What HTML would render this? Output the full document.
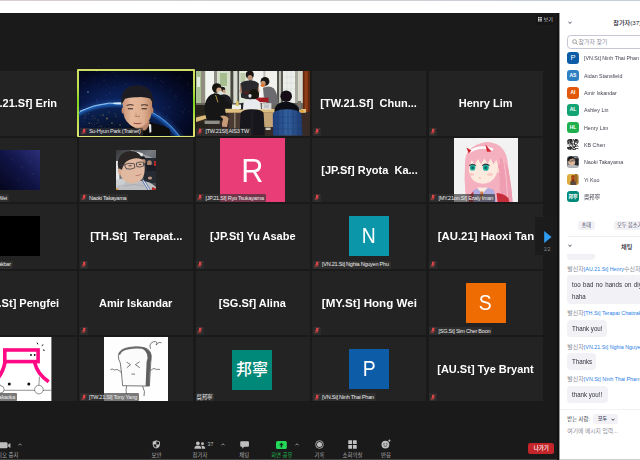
<!DOCTYPE html>
<html lang="ko"><head><meta charset="utf-8"><title>Zoom 회의</title>
<style>
html,body{margin:0;padding:0}
body{width:640px;height:460px;overflow:hidden;background:#1a1a1a;position:relative;font-family:"Liberation Sans","Noto Sans CJK KR",sans-serif}
.a{position:absolute}
.tile{position:absolute;width:114px;height:64.4px;background:#232323;overflow:hidden}
.tile>svg{position:absolute;display:block}
.nm,.nmr{position:absolute;left:6px;right:6px;top:0;height:64.4px;line-height:64.4px;text-align:center;color:#fff;font-weight:bold;font-size:11.3px;white-space:nowrap}
.nmr{left:auto;text-align:right}
.nm span,.nmr span{display:inline-block;transform:scaleX(.975);transform-origin:50% 50%}
.nmr span{transform-origin:100% 50%}
.lb,.lbr{position:absolute;left:.5px;bottom:0;height:8px;background:rgba(52,52,52,.66);color:#ececec;font-size:5.5px;letter-spacing:-.22px;line-height:8.6px;padding:0 2px 0 .5px;white-space:nowrap;display:flex;align-items:center;border-radius:1px}
.lb.mo{background:#2b2c2c;padding:0 0 0 .5px}.lb.mo .mic{margin-right:1.2px}
.lbr{left:auto;padding:0 2px}
.lb .mic{display:block;margin-right:2.3px;margin-left:.6px;flex:none;position:relative;top:-.4px}
.av{position:absolute;color:#fff;text-align:center}
.av span{display:inline-block;transform:scaleX(.9)}
.active{position:absolute;box-sizing:border-box;border-radius:1px;background:linear-gradient(180deg,#d3df6a 0%,#c2e04e 25%,#7fd61a 50%,#c6e055 80%,#e3e56f 100%)}
.panel{position:absolute;left:559px;top:0;width:81px;height:460px;background:#fff;overflow:hidden;color:#232333}
.pav{position:absolute;left:8.2px;width:11.6px;height:11.6px;border-radius:3px;color:#fff;font-weight:bold;text-align:center;line-height:11.6px;overflow:hidden}
.pav svg{display:block}
.pn{position:absolute;left:24.6px;height:11.6px;line-height:12.4px;font-size:6.2px;color:#43434f;white-space:nowrap;transform:scaleX(.86);transform-origin:0 50%}
.btn{position:absolute;background:#f1f1f6;border-radius:2.5px;color:#454556;font-size:5.2px;text-align:center;white-space:nowrap}
.snd{position:absolute;left:8.3px;font-size:6px;line-height:7px;color:#8a8a95;white-space:nowrap}
.snd b{font-weight:normal;color:#2a80e6;font-size:5.35px}
.bub{position:absolute;left:8px;background:#f1f1f6;border-radius:4px;font-size:7px;color:#30303c;white-space:nowrap}
.bub span{position:absolute;left:4.8px;transform:scaleX(.88);transform-origin:0 50%}
.tl{position:absolute;top:450.6px;font-size:5.4px;line-height:8px;color:#aaaaaa;text-align:center;width:40px;white-space:nowrap}
.ti{position:absolute}
</style></head><body>
<div class="a" style="left:0;top:0;width:640px;height:12.6px;background:#fff"></div>
<div class="tile" style="left:-37.5px;top:71.4px"><div class="nmr" style="right:19.5px"><span>.21.Sf] Erin</span></div></div>
<div class="active" style="left:77.2px;top:69.2px;width:117.8px;height:67.8px"></div>
<div class="tile" style="left:79px;top:71.4px;"><svg style="left:0;top:0" width="114" height="64.4" viewBox="0 0 114 64.4">
<defs>
<radialGradient id="spbg" cx="38%" cy="62%" r="75%"><stop offset="0" stop-color="#0f2d6e"/><stop offset=".4" stop-color="#0a1d52"/><stop offset=".75" stop-color="#050c2b"/><stop offset="1" stop-color="#020514"/></radialGradient>
<radialGradient id="earth" cx="36.4" cy="111.7" r="79.5" gradientUnits="userSpaceOnUse"><stop offset="0" stop-color="#04091c"/><stop offset=".7" stop-color="#06112c"/><stop offset=".94" stop-color="#0b2152"/><stop offset=".988" stop-color="#1f5fb8"/><stop offset="1" stop-color="#7cc4ff"/></radialGradient>
<radialGradient id="glow" cx="36.4" cy="111.7" r="85" gradientUnits="userSpaceOnUse"><stop offset=".9" stop-color="#3f9cff" stop-opacity=".4"/><stop offset="1" stop-color="#1c56c0" stop-opacity="0"/></radialGradient>
<filter id="b1" x="-20%" y="-20%" width="140%" height="140%"><feGaussianBlur stdDeviation=".7"/></filter>
<filter id="b2" x="-20%" y="-20%" width="140%" height="140%"><feGaussianBlur stdDeviation="1.2"/></filter>
<linearGradient id="skin" x1="0" x2="1" y1="0" y2="0"><stop offset="0" stop-color="#cc9679"/><stop offset=".3" stop-color="#e6b89b"/><stop offset=".7" stop-color="#dfae90"/><stop offset="1" stop-color="#bd8768"/></linearGradient>
</defs>
<rect width="114" height="64.4" fill="url(#spbg)"/>
<g fill="#7fa4e8" opacity=".7"><circle cx="27.1" cy="24.5" r="0.18"/><circle cx="68.8" cy="28.2" r="0.13"/><circle cx="1.5" cy="37.7" r="0.16"/><circle cx="26.7" cy="44.8" r="0.20"/><circle cx="95.4" cy="21.4" r="0.22"/><circle cx="17.2" cy="28.6" r="0.26"/><circle cx="59.6" cy="33.4" r="0.23"/><circle cx="7.3" cy="34.1" r="0.21"/><circle cx="34.3" cy="1.4" r="0.26"/><circle cx="53.9" cy="32.3" r="0.26"/><circle cx="81.4" cy="41.4" r="0.18"/><circle cx="91.3" cy="20.0" r="0.27"/><circle cx="100.2" cy="4.4" r="0.14"/><circle cx="24.7" cy="43.4" r="0.19"/><circle cx="71.4" cy="13.5" r="0.20"/><circle cx="44.0" cy="15.8" r="0.21"/><circle cx="66.6" cy="40.7" r="0.23"/><circle cx="105.9" cy="38.5" r="0.28"/><circle cx="76.5" cy="7.3" r="0.26"/><circle cx="110.0" cy="40.7" r="0.21"/><circle cx="81.4" cy="9.5" r="0.25"/><circle cx="65.4" cy="12.8" r="0.13"/><circle cx="97.3" cy="44.5" r="0.13"/><circle cx="91.3" cy="18.5" r="0.14"/><circle cx="33.5" cy="34.6" r="0.26"/><circle cx="5.0" cy="27.7" r="0.13"/><circle cx="81.9" cy="14.9" r="0.26"/><circle cx="111.8" cy="22.7" r="0.28"/><circle cx="35.3" cy="3.5" r="0.22"/><circle cx="3.6" cy="8.9" r="0.19"/><circle cx="69.6" cy="7.0" r="0.13"/><circle cx="98.9" cy="14.1" r="0.27"/><circle cx="102.2" cy="17.0" r="0.19"/><circle cx="59.3" cy="29.0" r="0.22"/><circle cx="63.8" cy="27.9" r="0.27"/><circle cx="57.8" cy="19.4" r="0.24"/><circle cx="27.1" cy="13.5" r="0.28"/><circle cx="59.4" cy="24.7" r="0.12"/><circle cx="47.3" cy="26.1" r="0.12"/><circle cx="70.2" cy="28.4" r="0.13"/><circle cx="71.5" cy="21.0" r="0.23"/><circle cx="40.2" cy="31.8" r="0.24"/><circle cx="2.5" cy="2.7" r="0.23"/><circle cx="109.8" cy="11.3" r="0.19"/><circle cx="67.6" cy="14.4" r="0.18"/><circle cx="35.6" cy="16.6" r="0.22"/><circle cx="34.2" cy="17.0" r="0.24"/><circle cx="3.1" cy="25.6" r="0.24"/><circle cx="35.3" cy="10.0" r="0.25"/><circle cx="27.2" cy="8.4" r="0.19"/><circle cx="79.6" cy="4.6" r="0.17"/><circle cx="38.0" cy="37.5" r="0.19"/><circle cx="97.5" cy="7.6" r="0.17"/><circle cx="74.1" cy="39.8" r="0.19"/><circle cx="25.7" cy="5.4" r="0.20"/><circle cx="21.8" cy="36.3" r="0.25"/><circle cx="20.9" cy="12.5" r="0.25"/><circle cx="73.2" cy="36.3" r="0.18"/><circle cx="14.8" cy="13.1" r="0.25"/><circle cx="30.9" cy="15.6" r="0.19"/><circle cx="47.9" cy="18.4" r="0.27"/><circle cx="17.8" cy="0.2" r="0.27"/><circle cx="100.3" cy="44.4" r="0.19"/><circle cx="108.3" cy="41.7" r="0.16"/><circle cx="85.0" cy="37.7" r="0.23"/><circle cx="59.2" cy="13.0" r="0.17"/><circle cx="25.9" cy="3.1" r="0.21"/><circle cx="32.7" cy="36.5" r="0.13"/><circle cx="103.0" cy="31.2" r="0.27"/><circle cx="102.2" cy="40.5" r="0.21"/></g><g fill="#9fc4ff"><circle cx="9" cy="21" r=".7" opacity=".8"/><circle cx="25" cy="9" r=".3"/><circle cx="31" cy="22" r=".35"/><circle cx="47" cy="13" r=".3"/><circle cx="18" cy="30" r=".3"/><circle cx="84" cy="11" r=".3"/><circle cx="97" cy="25" r=".35"/><circle cx="76" cy="7" r=".25"/><circle cx="104" cy="41" r=".3"/><circle cx="90" cy="36" r=".3"/><circle cx="38" cy="5" r=".25"/><circle cx="15" cy="7" r=".25"/><circle cx="67" cy="16" r=".25"/><circle cx="109" cy="14" r=".25"/><circle cx="54" cy="6" r=".2"/><circle cx="100" cy="6" r=".25"/><circle cx="5" cy="12" r=".25"/><circle cx="88" cy="45" r=".25"/></g>
<circle cx="36.4" cy="111.7" r="85" fill="url(#glow)"/>
<circle cx="36.4" cy="111.7" r="79.5" fill="url(#earth)"/>
<path d="M1 40.2 A79.5 79.5 0 0 1 60 35.8" fill="none" stroke="#a9dcff" stroke-width=".9" filter="url(#b1)" opacity=".9"/>
<ellipse cx="41" cy="32.4" rx="7" ry="1.1" fill="#dff3ff" filter="url(#b1)" opacity=".85"/>
<g fill="#c9a56a" opacity=".7"><circle cx="2.6" cy="56.9" r="0.23"/><circle cx="14.6" cy="55.3" r="0.30"/><circle cx="19.4" cy="60.8" r="0.32"/><circle cx="16.3" cy="47.0" r="0.37"/><circle cx="22.0" cy="57.6" r="0.27"/><circle cx="10.3" cy="52.7" r="0.36"/><circle cx="9.2" cy="57.8" r="0.38"/><circle cx="35.9" cy="58.5" r="0.20"/><circle cx="28.4" cy="59.3" r="0.21"/><circle cx="13.4" cy="47.4" r="0.31"/><circle cx="19.8" cy="51.5" r="0.36"/><circle cx="2.1" cy="43.1" r="0.23"/><circle cx="7.2" cy="43.4" r="0.39"/><circle cx="37.9" cy="43.7" r="0.30"/><circle cx="15.3" cy="48.3" r="0.27"/><circle cx="29.2" cy="53.7" r="0.27"/><circle cx="10.0" cy="48.6" r="0.22"/><circle cx="25.3" cy="56.3" r="0.28"/><circle cx="5.4" cy="45.6" r="0.27"/><circle cx="27.4" cy="57.7" r="0.28"/><circle cx="35.6" cy="54.5" r="0.29"/><circle cx="17.6" cy="51.9" r="0.34"/><circle cx="19.7" cy="55.9" r="0.29"/><circle cx="12.3" cy="52.7" r="0.34"/><circle cx="5.0" cy="50.5" r="0.29"/><circle cx="38.9" cy="60.7" r="0.27"/><circle cx="39.7" cy="57.8" r="0.25"/><circle cx="21.5" cy="44.5" r="0.36"/><circle cx="29.8" cy="59.7" r="0.36"/><circle cx="30.0" cy="56.7" r="0.31"/><circle cx="6.3" cy="53.8" r="0.20"/><circle cx="8.0" cy="57.5" r="0.21"/><circle cx="5.9" cy="44.0" r="0.38"/><circle cx="9.5" cy="42.5" r="0.37"/><circle cx="7.1" cy="58.9" r="0.33"/><circle cx="37.1" cy="61.0" r="0.32"/><circle cx="35.5" cy="42.7" r="0.35"/><circle cx="23.5" cy="56.3" r="0.22"/><circle cx="33.5" cy="60.7" r="0.21"/><circle cx="15.6" cy="53.3" r="0.37"/></g><g fill="#d9b26a" filter="url(#b1)" opacity=".55"><circle cx="24" cy="44" r=".7"/><circle cx="28" cy="47.5" r=".9"/><circle cx="19" cy="49" r=".6"/><circle cx="33" cy="52" r=".8"/><circle cx="14" cy="45" r=".5"/><circle cx="37" cy="45" r=".6"/><circle cx="10" cy="52" r=".6"/><circle cx="41" cy="54" r=".7"/><circle cx="22" cy="55" r=".6"/><circle cx="30" cy="41" r=".5"/><circle cx="6" cy="47" r=".5"/></g>
<g filter="url(#b1)">
<path d="M50 56 L48 64.4 H92 L90.4 58 Q85 54.6 76 52.6 L68 50 Z" fill="#0b0b0d"/>
<path d="M69.6 52.8 L72.2 53.6 L72.4 61 L70.6 62 Z" fill="#ececec"/>
<path d="M50 52 Q57 60 66 59.4 Q70.6 56 70.6 50 L52 46 Z" fill="#b98567"/>
<path d="M44 31 Q43 44 47.4 50 Q52.6 56.6 58.5 56.8 Q64.6 56.6 69.6 50 Q74 44 73 30 Q67 21 58.4 21 Q49 21 44 31 Z" fill="url(#skin)"/>
<ellipse cx="43.8" cy="39.6" rx="1.2" ry="3" fill="#c28e72"/><ellipse cx="73.2" cy="39.6" rx="1.2" ry="3" fill="#b78265"/>
<path d="M42.6 35.6 Q40.6 21 49.6 16 Q58 12.6 67 16 Q75.6 21 74.2 35.6 Q73.6 31 71.4 27.6 Q65 25.6 58.4 26.2 Q51 25.8 45.6 27.8 Q43.6 31 42.6 35.6 Z" fill="#1d1d21"/>
<path d="M47.6 34.4 Q51 33 54.6 34.2 M62 34.2 Q65.6 33 69 34.4" stroke="#3a2a24" stroke-width="1" fill="none"/>
<path d="M48.8 37.8 H54 M62.6 37.8 H67.8" stroke="#2a1d1a" stroke-width="1"/>
<path d="M55.8 45 Q58.4 46.4 61 45" stroke="#a06a55" stroke-width=".8" fill="none"/>
<path d="M54.4 52 Q58.4 53.2 62.4 52" stroke="#a4524c" stroke-width="1.1" fill="none"/><path d="M56.6 42 Q58 44 57 45.4" stroke="#b98567" stroke-width=".6" fill="none"/>
</g>
</svg>
<div class="lb"><svg class="mic" viewBox="0.4 0.4 6.4 7.4" width="6" height="7"><rect x="2.6" y="0.8" width="2" height="4" rx="1" fill="#e8474a"/><path d="M2 3.8 Q2 5.8 3.6 5.8 Q5.2 5.8 5.2 3.8 M3.6 5.8 V7" stroke="#e8474a" stroke-width=".6" fill="none"/><path d="M0.9 7 L6.3 1" stroke="#e8474a" stroke-width=".7" /></svg><span>Su-Hyun Park (Trainer)</span></div></div>
<div class="tile" style="left:195.5px;top:71.4px;"><svg style="left:0;top:0" width="114" height="64.4" viewBox="0 0 114 64.4">
<defs>
<filter id="rb" x="-10%" y="-10%" width="120%" height="120%"><feGaussianBlur stdDeviation=".5"/></filter>
<linearGradient id="win" x1="0" x2="0" y1="0" y2="1"><stop offset="0" stop-color="#edf1ea"/><stop offset=".5" stop-color="#dde3d6"/><stop offset="1" stop-color="#c9c7b9"/></linearGradient>
<linearGradient id="jk" x1="0" x2="1" y1="0" y2="0"><stop offset="0" stop-color="#1f3f7c"/><stop offset=".5" stop-color="#34619f"/><stop offset="1" stop-color="#1d3b73"/></linearGradient>
</defs>
<rect width="114" height="64.4" fill="url(#win)"/>
<g filter="url(#rb)">
<rect x="0" y="0" width="5" height="32" fill="#a9c094"/>
<rect x="1" y="6" width="3" height="10" fill="#e4ecdf"/>
<rect x="5" y="0" width="4.4" height="36" fill="#918d80"/>
<rect x="9.4" y="0" width="8.6" height="32" fill="#f2f4ef"/>
<rect x="18" y="0" width="3.2" height="36" fill="#8e8e86"/>
<rect x="21.2" y="0" width="13.2" height="32" fill="#d5dfc9"/>
<rect x="24" y="2" width="7" height="13" fill="#a6bd8e"/>
<rect x="22" y="15" width="6" height="9" fill="#eef2ea"/>
<rect x="34.4" y="0" width="3.2" height="38" fill="#46463f"/>
<rect x="37.6" y="0" width="3.8" height="34" fill="#d6dacf"/>
<rect x="41.4" y="0" width="2" height="38" fill="#4f4f48"/>
<rect x="43.4" y="0" width="9.6" height="32" fill="#e2ead9"/>
<rect x="44.4" y="2" width="5" height="9" fill="#bccaaa"/>
<rect x="53" y="0" width="3.6" height="36" fill="#6a6a62"/>
<rect x="56.6" y="0" width="10.8" height="32" fill="#f3f4f1"/>
<rect x="67.4" y="0" width="2.2" height="32" fill="#bdbdb6"/>
<rect x="69.6" y="0" width="11.4" height="32" fill="#f1f2ee"/>
<rect x="81" y="0" width="2.4" height="36" fill="#56564f"/>
<rect x="83.4" y="0" width="1.4" height="34" fill="#cfcfc8"/>
<rect x="84.8" y="0" width="2.2" height="36" fill="#5c5c55"/>
<rect x="87" y="0" width="12" height="32" fill="#eceeea"/>
<path d="M87 6 H99 M87 12 H99 M87 18 H99 M91 0 V30 M95 0 V30" stroke="#d3d5d0" stroke-width=".5"/>
<rect x="99" y="0" width="3" height="36" fill="#a9a89e"/>
<rect x="102" y="0" width="5" height="36" fill="#d6d6cd"/>
<rect x="106.8" y="0" width="7.2" height="64.4" fill="#5e2610"/>
<rect x="108.4" y="0" width="3.4" height="46" fill="#8d3c16"/>
<!-- lower background -->
<rect x="0" y="32" width="107" height="10" fill="#6a665b"/>
<rect x="0" y="41" width="114" height="24" fill="#372b25"/>
<rect x="0" y="34" width="9" height="10" fill="#26231f"/>
<rect x="67" y="42" width="12" height="14" fill="#c4a374"/>
<rect x="33" y="42" width="12" height="16" fill="#4a3b31"/>
<rect x="38" y="42" width="1.6" height="16" fill="#8a7a68"/>
<!-- tables -->
<path d="M23 38 H110 V41.8 H23 Z" fill="#dfbf80"/>
<path d="M0 46.6 L13.6 43 V46.4 L0 51 Z" fill="#dcbc7a"/>
<rect x="0" y="51" width="13" height="13.4" fill="#26221f"/>
<!-- back person 2 -->
<circle cx="26.6" cy="18.4" r="2.6" fill="#1c1a18"/>
<ellipse cx="28" cy="20.4" rx="1.6" ry="1.8" fill="#c79f84"/>
<path d="M24 24 Q30 21.6 34 26 L36.6 33 L35 36.6 H24 Z" fill="#1e1e22"/>
<!-- left seated person -->
<circle cx="20.8" cy="17" r="4.8" fill="#16130f"/>
<ellipse cx="23" cy="19.4" rx="2.7" ry="3" fill="#d2aa8c"/>
<ellipse cx="24.4" cy="21.6" rx="2.2" ry="1.9" fill="#d4e2db"/>
<path d="M9 33 Q11 24.4 18 22.6 Q26 22.6 29 28.4 L36 35 L35.4 37.6 L29 37.4 L29.6 42 L31 49 L11.6 50 Q7.6 42 9 33 Z" fill="#131315"/>
<path d="M19.6 24 L22 31.4" stroke="#c9a64a" stroke-width=".9"/>
<path d="M24 45 Q30 43.4 32.6 47.6 L31 56 L25.4 55.4 L27 48 Z" fill="#c79a78"/>
<rect x="8.6" y="49.6" width="15" height="3.4" fill="#8f8d88"/>
<rect x="12" y="53" width="14" height="11.4" fill="#2d2823"/>
<!-- standing center -->
<circle cx="53.8" cy="3.8" r="4" fill="#1a1613"/>
<ellipse cx="54" cy="6.6" rx="2.5" ry="2.7" fill="#b98e73"/>
<path d="M44.4 12.4 Q48 9.4 54 9.6 Q60 9.4 62.8 12.4 L62.8 27.6 Q54 30 45 26.6 Z" fill="#2a2a2f"/>
<path d="M45 13 L43.4 21 L46 22.4 Z M62.4 13 L63.6 21 L61.4 22.4 Z" fill="#b98e73"/>
<rect x="48" y="20" width="11.6" height="3.4" fill="#4a2420"/>
<!-- standing right w/ orange mask -->
<circle cx="69" cy="10.4" r="4.4" fill="#1b1714"/>
<ellipse cx="67.2" cy="12.4" rx="2.4" ry="2.7" fill="#c49673"/>
<ellipse cx="66.8" cy="14.2" rx="2.2" ry="1.7" fill="#dd7530"/>
<path d="M67 17 Q73 13.6 78 17.4 Q82 23 82.4 33.8 L71 35 L68 25 Z" fill="#6c6c70"/>
<!-- red laptop -->
<rect x="60.2" y="26.6" width="12.4" height="4.6" fill="#a01c24"/>
<!-- seated center white shirt -->
<circle cx="58" cy="23.2" r="5" fill="#15120f"/>
<ellipse cx="54" cy="24.8" rx="1.6" ry="1.9" fill="#dfe3e6"/>
<path d="M47.4 31.4 Q50 27.8 57 28.2 Q62.6 28.2 64.4 32 L65 38.4 H46.6 Z" fill="#e9eaee"/>
<path d="M43.4 33 L47.4 31.4 L47 38.4 L43.8 38.4 Z" fill="#23232a"/>
<!-- things on table -->
<rect x="66" y="32.2" width="9.4" height="6.4" fill="#dcdcd9"/>
<rect x="68" y="33.4" width="5" height="3.6" fill="#bfc3c6"/>
<rect x="101.6" y="30" width="3.6" height="9" fill="#77756c"/>
<rect x="104.6" y="39" width="3" height="2.4" fill="#e0a832"/>
<rect x="36" y="33.6" width="9" height="4.4" fill="#efefe8"/>
<rect x="40" y="30" width="2.6" height="5" fill="#d8c46a"/>
<!-- right seated black -->
<circle cx="90.2" cy="25.2" r="5.8" fill="#131112"/>
<path d="M78.6 38 Q80 32 88 30.8 Q98 30.4 102.6 36.4 L103.6 42.6 H78.4 Z" fill="#0f0f12"/>
<!-- center chair w/ dark jacket -->
<path d="M44.6 42 Q46.6 38.2 55.6 38.2 Q66 38.2 67.6 42 L68.8 64.4 H43.6 Z" fill="#14141a"/>
<path d="M56 39 V64" stroke="#2a2a31" stroke-width=".8"/>
<!-- blue jacket chair -->
<path d="M76.8 43 Q78 38.6 90 38.2 Q103.6 38.2 105.4 43 L106.4 64.4 H77 Z" fill="url(#jk)"/>
<path d="M82 40 V64 M87 39 V64 M92 39 V64 M97 39 V64 M102 40 V64" stroke="#183463" stroke-width=".7" opacity=".7"/>
<path d="M77 46 H106 M77 52 H106 M77 58 H106" stroke="#1b3a70" stroke-width=".5" opacity=".6"/>
<rect x="69.6" y="56.6" width="5" height="2.4" fill="#cfcac0"/>
</g>
</svg>
<div class="lb"><svg class="mic" viewBox="0.4 0.4 6.4 7.4" width="6" height="7"><rect x="2.6" y="0.8" width="2" height="4" rx="1" fill="#e8474a"/><path d="M2 3.8 Q2 5.8 3.6 5.8 Q5.2 5.8 5.2 3.8 M3.6 5.8 V7" stroke="#e8474a" stroke-width=".6" fill="none"/><path d="M0.9 7 L6.3 1" stroke="#e8474a" stroke-width=".7" /></svg><span>[TW.21Sf] AIS3 TW</span></div></div>
<div class="tile" style="left:312px;top:71.4px;"><div class="nm"><span>[TW.21.Sf]&nbsp; Chun...</span></div><div class="lb mo"><svg class="mic" viewBox="0.4 0.4 6.4 7.4" width="6" height="7"><rect x="2.6" y="0.8" width="2" height="4" rx="1" fill="#e8474a"/><path d="M2 3.8 Q2 5.8 3.6 5.8 Q5.2 5.8 5.2 3.8 M3.6 5.8 V7" stroke="#e8474a" stroke-width=".6" fill="none"/><path d="M0.9 7 L6.3 1" stroke="#e8474a" stroke-width=".7" /></svg></div></div>
<div class="tile" style="left:428.5px;top:71.4px;"><div class="nm"><span>Henry Lim</span></div><div class="lb mo"><svg class="mic" viewBox="0.4 0.4 6.4 7.4" width="6" height="7"><rect x="2.6" y="0.8" width="2" height="4" rx="1" fill="#e8474a"/><path d="M2 3.8 Q2 5.8 3.6 5.8 Q5.2 5.8 5.2 3.8 M3.6 5.8 V7" stroke="#e8474a" stroke-width=".6" fill="none"/><path d="M0.9 7 L6.3 1" stroke="#e8474a" stroke-width=".7" /></svg></div></div>
<div class="tile" style="left:-37.5px;top:137.8px"><svg style="left:37px;top:12.2px" width="40.4" height="40" viewBox="0 0 40.4 40">
<defs><linearGradient id="ng" x1="0" x2="1" y1="1" y2="0"><stop offset="0" stop-color="#05061c"/><stop offset=".5" stop-color="#101446"/><stop offset="1" stop-color="#2b2f78"/></linearGradient></defs>
<rect width="40.4" height="40" fill="url(#ng)"/>
<g fill="#b9c2ee"><circle cx="12" cy="9" r=".25"/><circle cx="22" cy="17" r=".3"/><circle cx="30" cy="11" r=".25"/><circle cx="18" cy="29" r=".25"/><circle cx="33" cy="24" r=".3"/><circle cx="8" cy="21" r=".2"/><circle cx="26" cy="5" r=".2"/></g>
</svg>
<div class="lbr" style="right:67.5px"><span>Wei</span></div></div>
<div class="tile" style="left:79px;top:137.8px;"><svg style="left:36.8px;top:12.2px" width="40" height="40" viewBox="0 0 40 40">
<defs><filter id="nb" x="-10%" y="-10%" width="120%" height="120%"><feGaussianBlur stdDeviation=".55"/></filter>
<linearGradient id="nbg" x1="0" x2="1" y1="0" y2="1"><stop offset="0" stop-color="#35373a"/><stop offset=".45" stop-color="#777b80"/><stop offset="1" stop-color="#3a3c42"/></linearGradient></defs>
<rect width="40" height="40" fill="url(#nbg)"/>
<g filter="url(#nb)">
<path d="M16 0 L40 9 V13 L14 2 Z" fill="#9a9ea2"/>
<path d="M21 1.6 L27 3.4 L26.4 6.4 L20.4 4.4 Z" fill="#e6e8ea"/>
<rect x="0" y="11" width="3.4" height="21" fill="#e6e6e6"/>
<path d="M25 8 H40 V33 H28 Z" fill="#272932"/>
<circle cx="26.6" cy="9" r="2.8" fill="#15151a"/>
<ellipse cx="27.6" cy="11.4" rx="2" ry="2.4" fill="#b48c76"/>
<ellipse cx="33.4" cy="13" rx="2.4" ry="2.8" fill="#a98570"/>
<path d="M30 15 H40 V21 H31 Z" fill="#1d1f27"/>
<ellipse cx="34" cy="28" rx="2.2" ry="1.6" fill="#b99580"/>
<path d="M38 11 h2 v5 h-2 z" fill="#b3262a"/>
<!-- hoodie -->
<path d="M0 32 Q4 28.6 12 30 L26 31 Q34 31 40 37 V40 H0 Z" fill="#bdbfc2"/>
<path d="M0 30 Q6 27.4 10 30 L8 34 L0 36 Z" fill="#cdd0d2"/>
<path d="M8 36 Q18 33 28 36" stroke="#a4a7aa" stroke-width=".8" fill="none"/>
<!-- face -->
<path d="M3.6 14 Q2.4 23 6.4 28.6 Q10 33.4 17 33.4 Q24.6 32.6 27.4 26.4 Q30 20 27.6 11.6 Q24 5 15 5 Q6 6 3.6 14 Z" fill="#e0b9a0"/>
<path d="M2.8 18 Q1 20 2.8 24 Q4.2 25.6 5.4 24.4 L4.6 18 Z" fill="#d6aa90"/>
<!-- hair -->
<path d="M2.4 19 Q0 8 7 3 Q14 -.8 21 2.4 Q25 4.6 26 9.4 Q22 7.6 18 8.4 Q11.6 9.6 9 13 Q6.6 16 5.8 20 Q3.8 17.6 2.4 19 Z" fill="#2b2826"/>
<!-- glasses -->
<path d="M8.6 14.6 Q13 12.4 18.4 13.8 L18.8 17.8 Q14 20.2 10 18.6 Z" fill="none" stroke="#3a3a42" stroke-width=".8"/>
<path d="M20.4 13 Q24.2 11.4 27.4 12.2 L27.6 16 Q23.6 17.8 20.8 16.6 Z" fill="none" stroke="#3a3a42" stroke-width=".8"/>
<path d="M3.6 15.2 L8.8 15" stroke="#3a3a42" stroke-width=".7"/>
<path d="M12.6 15.8 h3 M22.8 14.4 h2.6" stroke="#2a2019" stroke-width=".8"/>
<path d="M19.6 25.6 Q23 26 25.4 24" stroke="#b0736a" stroke-width=".8" fill="none"/>
<path d="M26 30 L32 40 M28 30 L34.4 40" stroke="#3b5ea8" stroke-width=".7"/>
<path d="M27 30 L33.2 40" stroke="#e8e8ee" stroke-width=".8"/>
<path d="M36.4 37 L40 38.6 V40 H35.6 Z" fill="#b3262a"/>
<rect x="0" y="38.6" width="2.4" height="1.4" fill="#d98a2a"/>
</g>
</svg>
<div class="lb"><svg class="mic" viewBox="0.4 0.4 6.4 7.4" width="6" height="7"><rect x="2.6" y="0.8" width="2" height="4" rx="1" fill="#e8474a"/><path d="M2 3.8 Q2 5.8 3.6 5.8 Q5.2 5.8 5.2 3.8 M3.6 5.8 V7" stroke="#e8474a" stroke-width=".6" fill="none"/><path d="M0.9 7 L6.3 1" stroke="#e8474a" stroke-width=".7" /></svg><span>Naoki Takayama</span></div></div>
<div class="tile" style="left:195.5px;top:137.8px;"><div class="av" style="left:24.8px;top:0px;width:64.4px;height:64.4px;line-height:64.4px;font-size:34px;background:#e93d77;"><span style="transform:scaleX(0.9)">R</span></div><div class="lb"><svg class="mic" viewBox="0.4 0.4 6.4 7.4" width="6" height="7"><rect x="2.6" y="0.8" width="2" height="4" rx="1" fill="#e8474a"/><path d="M2 3.8 Q2 5.8 3.6 5.8 Q5.2 5.8 5.2 3.8 M3.6 5.8 V7" stroke="#e8474a" stroke-width=".6" fill="none"/><path d="M0.9 7 L6.3 1" stroke="#e8474a" stroke-width=".7" /></svg><span>[JP.21.Sf] Ryo Tsukayama</span></div></div>
<div class="tile" style="left:312px;top:137.8px;"><div class="nm"><span>[JP.Sf] Ryota&nbsp; Ka...</span></div><div class="lb mo"><svg class="mic" viewBox="0.4 0.4 6.4 7.4" width="6" height="7"><rect x="2.6" y="0.8" width="2" height="4" rx="1" fill="#e8474a"/><path d="M2 3.8 Q2 5.8 3.6 5.8 Q5.2 5.8 5.2 3.8 M3.6 5.8 V7" stroke="#e8474a" stroke-width=".6" fill="none"/><path d="M0.9 7 L6.3 1" stroke="#e8474a" stroke-width=".7" /></svg></div></div>
<div class="tile" style="left:428.5px;top:137.8px;"><svg style="left:25px;top:0" width="64.4" height="64.4" viewBox="0 0 64.4 64.4">
<defs><filter id="ab" x="-10%" y="-10%" width="120%" height="120%"><feGaussianBlur stdDeviation=".35"/></filter></defs>
<rect width="64.4" height="64.4" fill="#f2f2f2"/>
<g filter="url(#ab)">
<!-- back hair -->
<path d="M11 26 Q10 8 31.8 4 Q50 4 53.4 22 L56 44 Q58 56 58.6 64.4 H13 Q10 50 11 26 Z" fill="#f4b0bf"/>
<path d="M41 18 Q47 30 47 64.4 H58.6 Q58 50 55 34 Q52 20 41 18 Z" fill="#ef9db0"/>
<path d="M49.6 22 Q53 40 53.6 64.4" stroke="#f7c3cf" stroke-width="1" fill="none"/>
<!-- shirt -->
<path d="M18.6 53 Q28 46.6 40 52 L42.6 64.4 H17 Z" fill="#adabdf"/>
<path d="M23 49.6 L28 56 L34 49.6 Z" fill="#fde9dd"/>
<path d="M26.6 53.6 L28.8 53.6 L29.8 60.6 L27.8 62.6 L25.8 60.6 Z" fill="#df7a3a"/>
<!-- jacket -->
<path d="M42.6 55 Q50 55.4 54.4 60 L55.4 64.4 H43.6 Z" fill="#c62f3b"/>
<path d="M15 58 L19.4 53.6 L19.4 64.4 H15 Z" fill="#c62f3b"/>
<!-- face -->
<path d="M14.6 25 Q13.6 37 20 43 Q28 48 36 44 Q44.4 39 44.2 25 Q42 16.6 29 16.4 Q16 17 14.6 25 Z" fill="#fdeade"/>
<ellipse cx="44.6" cy="32.4" rx="1.6" ry="2.6" fill="#fbdccf"/>
<ellipse cx="17.4" cy="36.4" rx="2.8" ry="1.5" fill="#f9c0be" opacity=".8"/>
<ellipse cx="36" cy="36.4" rx="3" ry="1.5" fill="#f9c0be" opacity=".8"/>
<!-- bangs -->
<path d="M11.4 28 Q11 11 30 8.6 Q47 9.4 46.6 30 L44 27.6 L42.4 21.6 L39.6 26.6 L36.6 20.6 L33.6 26 L30.4 20.4 L27 26.6 L24 21 L20.6 27 L17.8 22 L15 29.4 Z" fill="#f4b0bf"/>
<path d="M11.2 27 Q9.8 42 12 57 L15.6 50 Q13.8 38 14.8 28 Z" fill="#f4b0bf"/>
<path d="M44 27 Q46.6 38 45.6 52 L49 56 Q50 38 47 25 Z" fill="#ef9db0"/>
<!-- hairband -->
<path d="M15.4 13.6 Q27 6.6 39 11.6" stroke="#fcfcfc" stroke-width="2.4" fill="none"/>
<!-- horns -->
<path d="M12.4 9.4 L17.4 12.6 L14.6 15.2 Z" fill="#d2222c"/>
<path d="M31.4 6.4 L37.4 13.4 L33 13.8 Z" fill="#d2222c"/>
<!-- eyes -->
<ellipse cx="18.6" cy="29.4" rx="2.7" ry="3.2" fill="#1fa99c"/>
<ellipse cx="31.8" cy="29.4" rx="3" ry="3.4" fill="#1fa99c"/>
<path d="M15.2 27.6 Q18.6 24.8 22 27.6 M28.2 27.6 Q31.8 24.6 35.6 27.6" stroke="#3a2a30" stroke-width="1.1" fill="none"/>
<circle cx="18.6" cy="29.8" r="1.2" fill="#0b5a55"/><circle cx="31.8" cy="29.8" r="1.3" fill="#0b5a55"/>
<path d="M24.6 40 h2.4" stroke="#c98a80" stroke-width=".5"/>
</g>
</svg>
<div class="lb"><svg class="mic" viewBox="0.4 0.4 6.4 7.4" width="6" height="7"><rect x="2.6" y="0.8" width="2" height="4" rx="1" fill="#e8474a"/><path d="M2 3.8 Q2 5.8 3.6 5.8 Q5.2 5.8 5.2 3.8 M3.6 5.8 V7" stroke="#e8474a" stroke-width=".6" fill="none"/><path d="M0.9 7 L6.3 1" stroke="#e8474a" stroke-width=".7" /></svg><span>[MY.21on.Sf] Ezaly Iman</span></div></div>
<div class="tile" style="left:-37.5px;top:204.2px"><div class="av" style="left:37px;top:12.2px;width:40px;height:40px;background:#000"></div><div class="lbr" style="right:63.7px"><span>akbar</span></div></div>
<div class="tile" style="left:79px;top:204.2px;"><div class="nm"><span style="transform:scaleX(0.995)">[TH.St]&nbsp; Terapat...</span></div><div class="lb mo"><svg class="mic" viewBox="0.4 0.4 6.4 7.4" width="6" height="7"><rect x="2.6" y="0.8" width="2" height="4" rx="1" fill="#e8474a"/><path d="M2 3.8 Q2 5.8 3.6 5.8 Q5.2 5.8 5.2 3.8 M3.6 5.8 V7" stroke="#e8474a" stroke-width=".6" fill="none"/><path d="M0.9 7 L6.3 1" stroke="#e8474a" stroke-width=".7" /></svg></div></div>
<div class="tile" style="left:195.5px;top:204.2px;"><div class="nm"><span>[JP.St] Yu Asabe</span></div><div class="lb mo"><svg class="mic" viewBox="0.4 0.4 6.4 7.4" width="6" height="7"><rect x="2.6" y="0.8" width="2" height="4" rx="1" fill="#e8474a"/><path d="M2 3.8 Q2 5.8 3.6 5.8 Q5.2 5.8 5.2 3.8 M3.6 5.8 V7" stroke="#e8474a" stroke-width=".6" fill="none"/><path d="M0.9 7 L6.3 1" stroke="#e8474a" stroke-width=".7" /></svg></div></div>
<div class="tile" style="left:312px;top:204.2px;"><div class="av" style="left:37px;top:12.2px;width:40px;height:40px;line-height:40px;font-size:21.5px;background:#0b97a9;"><span style="transform:scaleX(0.9)">N</span></div><div class="lb"><svg class="mic" viewBox="0.4 0.4 6.4 7.4" width="6" height="7"><rect x="2.6" y="0.8" width="2" height="4" rx="1" fill="#e8474a"/><path d="M2 3.8 Q2 5.8 3.6 5.8 Q5.2 5.8 5.2 3.8 M3.6 5.8 V7" stroke="#e8474a" stroke-width=".6" fill="none"/><path d="M0.9 7 L6.3 1" stroke="#e8474a" stroke-width=".7" /></svg><span>[VN.21.St] Nghia Nguyen Phu</span></div></div>
<div class="tile" style="left:428.5px;top:204.2px;"><div class="nm"><span style="transform:scaleX(1.005)">[AU.21] Haoxi Tan</span></div><div class="lb mo"><svg class="mic" viewBox="0.4 0.4 6.4 7.4" width="6" height="7"><rect x="2.6" y="0.8" width="2" height="4" rx="1" fill="#e8474a"/><path d="M2 3.8 Q2 5.8 3.6 5.8 Q5.2 5.8 5.2 3.8 M3.6 5.8 V7" stroke="#e8474a" stroke-width=".6" fill="none"/><path d="M0.9 7 L6.3 1" stroke="#e8474a" stroke-width=".7" /></svg></div></div>
<div class="tile" style="left:-37.5px;top:270.6px"><div class="nmr" style="right:17.5px"><span>.St] Pengfei</span></div></div>
<div class="tile" style="left:79px;top:270.6px;"><div class="nm"><span>Amir Iskandar</span></div><div class="lb mo"><svg class="mic" viewBox="0.4 0.4 6.4 7.4" width="6" height="7"><rect x="2.6" y="0.8" width="2" height="4" rx="1" fill="#e8474a"/><path d="M2 3.8 Q2 5.8 3.6 5.8 Q5.2 5.8 5.2 3.8 M3.6 5.8 V7" stroke="#e8474a" stroke-width=".6" fill="none"/><path d="M0.9 7 L6.3 1" stroke="#e8474a" stroke-width=".7" /></svg></div></div>
<div class="tile" style="left:195.5px;top:270.6px;"><div class="nm"><span>[SG.Sf] Alina</span></div><div class="lb mo"><svg class="mic" viewBox="0.4 0.4 6.4 7.4" width="6" height="7"><rect x="2.6" y="0.8" width="2" height="4" rx="1" fill="#e8474a"/><path d="M2 3.8 Q2 5.8 3.6 5.8 Q5.2 5.8 5.2 3.8 M3.6 5.8 V7" stroke="#e8474a" stroke-width=".6" fill="none"/><path d="M0.9 7 L6.3 1" stroke="#e8474a" stroke-width=".7" /></svg></div></div>
<div class="tile" style="left:312px;top:270.6px;"><div class="nm"><span style="transform:scaleX(1.026)">[MY.St] Hong Wei</span></div><div class="lb mo"><svg class="mic" viewBox="0.4 0.4 6.4 7.4" width="6" height="7"><rect x="2.6" y="0.8" width="2" height="4" rx="1" fill="#e8474a"/><path d="M2 3.8 Q2 5.8 3.6 5.8 Q5.2 5.8 5.2 3.8 M3.6 5.8 V7" stroke="#e8474a" stroke-width=".6" fill="none"/><path d="M0.9 7 L6.3 1" stroke="#e8474a" stroke-width=".7" /></svg></div></div>
<div class="tile" style="left:428.5px;top:270.6px;"><div class="av" style="left:37px;top:12.2px;width:40px;height:40px;line-height:40px;font-size:21.5px;background:#ee6c02;"><span style="transform:scaleX(0.9)">S</span></div><div class="lb"><svg class="mic" viewBox="0.4 0.4 6.4 7.4" width="6" height="7"><rect x="2.6" y="0.8" width="2" height="4" rx="1" fill="#e8474a"/><path d="M2 3.8 Q2 5.8 3.6 5.8 Q5.2 5.8 5.2 3.8 M3.6 5.8 V7" stroke="#e8474a" stroke-width=".6" fill="none"/><path d="M0.9 7 L6.3 1" stroke="#e8474a" stroke-width=".7" /></svg><span>[SG.St] Sim Cher Boon</span></div></div>
<div class="tile" style="left:-37.5px;top:337px"><svg style="left:24.8px;top:0" width="64.4" height="64.4" viewBox="-12.7 336.9 64.4 64.4">
<rect x="-12.7" y="336.9" width="64.4" height="64.4" fill="#fff"/>
<g fill="none" stroke="#ff0a84" stroke-width="3.6">
<rect x="5.1" y="349.9" width="33.3" height="11.6"/>
<path d="M5.2 362.5 Q3.6 372 -4 381"/>
<path d="M35 362.5 Q37.6 374 49 381.6"/>
</g>
<g fill="#111"><circle cx="31.3" cy="354.9" r=".95"/><circle cx="35" cy="354.9" r=".95"/><circle cx="9.6" cy="384" r="1.5"/><circle cx="29.1" cy="384" r="1.5"/></g>
<g stroke="#111" stroke-width="1" fill="none"><path d="M37.4 342.6 L38.2 344.2 M42 345.6 L43.6 344.6 M43.2 349.8 L45 350.2"/></g>
<g stroke="#222" stroke-width=".5" fill="none"><path d="M-12.7 390.2 H51.7"/><path d="M39.8 376.6 Q39.4 381 39.2 385"/><path d="M-1 380 Q-.4 383 .4 385.6"/></g>
<circle cx=".7" cy="389.3" r="3.7" fill="#fff" stroke="#222" stroke-width=".5"/>
<circle cx="39.2" cy="389.5" r="4.3" fill="#fff" stroke="#222" stroke-width=".5"/>
</svg>
<div class="lbr" style="right:59.5px"><span>akaoka</span></div></div>
<div class="tile" style="left:79px;top:337px;"><svg style="left:25px;top:0" width="64.4" height="64.4" viewBox="104 336.9 64.4 64.4">
<defs><filter id="bb" x="-10%" y="-10%" width="120%" height="120%"><feGaussianBlur stdDeviation=".3"/></filter></defs>
<rect x="104" y="336.9" width="64.4" height="64.4" fill="#fefefe"/>
<g filter="url(#bb)">
<path d="M118.4 355.4 Q119 349 129 347.4 Q140 345.6 147 348.6 Q152 351.6 151 358.6 L149.4 386 L122.6 385.6 Q121.4 370 120.2 362.6 Q118 359 118.4 355.4 Z" fill="#fbfbfb" stroke="#555" stroke-width=".8"/>
<path d="M119.2 354.6 Q120.4 349.6 129 348.2 Q139 346.6 146 349" fill="none" stroke="#6a6a6a" stroke-width="1.8"/>
<path d="M141.6 347.4 Q150.6 348.6 151.4 356 Q151.6 360 150.2 363 L149.4 386 L145.6 386 L146.6 362 Q148.4 358 147 354 Q145.6 350.6 141.6 347.4 Z" fill="#5e5e5e"/>
<g stroke="#444" stroke-width=".7" fill="none">
<path d="M126.6 362 L130.6 364.6 L126.8 367.6"/><path d="M139.6 361.6 L135.4 364.6 L139.8 367.6"/><path d="M131.4 374 H135"/>
<path d="M121.6 372.6 Q117 368 114.6 370 Q112 368 110.4 369.6"/>
<path d="M150.6 370.6 Q154 367 156.6 369.6 Q158.6 368.6 160 369.6"/>
<path d="M126.6 386 Q125.6 390 126.4 393.6"/><path d="M142.6 386 Q145.6 392 144 396"/>
<path d="M150.6 348.6 Q148.6 343 153.6 341.6 Q158.6 341 156 345 Q159 341 161.6 342.6"/>
</g></g>
</svg>
<div class="lb"><svg class="mic" viewBox="0.4 0.4 6.4 7.4" width="6" height="7"><rect x="2.6" y="0.8" width="2" height="4" rx="1" fill="#e8474a"/><path d="M2 3.8 Q2 5.8 3.6 5.8 Q5.2 5.8 5.2 3.8 M3.6 5.8 V7" stroke="#e8474a" stroke-width=".6" fill="none"/><path d="M0.9 7 L6.3 1" stroke="#e8474a" stroke-width=".7" /></svg><span>[TW.21.Sf] Tony Yang</span></div></div>
<div class="tile" style="left:195.5px;top:337px;"><div class="av" style="left:37px;top:12.2px;width:40px;height:40px;line-height:40px;font-size:16px;background:#008878;font-family:'Liberation Sans','Noto Sans CJK TC',sans-serif;font-weight:500;margin:.6px 0 0 -.4px"><span style="transform:scaleX(1)">邦寧</span></div><div class="lb"><span>吳邦寧</span></div></div>
<div class="tile" style="left:312px;top:337px;"><div class="av" style="left:37px;top:12.2px;width:40px;height:40px;line-height:40px;font-size:21.5px;background:#0d5ca8;"><span style="transform:scaleX(0.9)">P</span></div><div class="lb"><svg class="mic" viewBox="0.4 0.4 6.4 7.4" width="6" height="7"><rect x="2.6" y="0.8" width="2" height="4" rx="1" fill="#e8474a"/><path d="M2 3.8 Q2 5.8 3.6 5.8 Q5.2 5.8 5.2 3.8 M3.6 5.8 V7" stroke="#e8474a" stroke-width=".6" fill="none"/><path d="M0.9 7 L6.3 1" stroke="#e8474a" stroke-width=".7" /></svg><span>[VN.St] Ninh Thai Phan</span></div></div>
<div class="tile" style="left:428.5px;top:337px;"><div class="nm"><span>[AU.St] Tye Bryant</span></div><div class="lb mo"><svg class="mic" viewBox="0.4 0.4 6.4 7.4" width="6" height="7"><rect x="2.6" y="0.8" width="2" height="4" rx="1" fill="#e8474a"/><path d="M2 3.8 Q2 5.8 3.6 5.8 Q5.2 5.8 5.2 3.8 M3.6 5.8 V7" stroke="#e8474a" stroke-width=".6" fill="none"/><path d="M0.9 7 L6.3 1" stroke="#e8474a" stroke-width=".7" /></svg></div></div>

<div class="a" style="left:534.5px;top:217.3px;width:24.5px;height:38px;background:#1b1b1b"></div>
<svg class="a" style="left:544px;top:231px" width="8" height="12" viewBox="0 0 8 12"><path d="M0.2 0 L7.6 6 L0.2 12 Z" fill="#2d9cf2"/></svg>
<div class="a" style="left:537px;top:246.5px;width:20px;text-align:center;font-size:4.8px;color:#8d8d8d;line-height:6px">1/2</div>
<div class="a" style="left:535.6px;top:15.4px;width:19.6px;height:9.2px;background:#161616;border-radius:2.5px"></div>
<svg class="a" style="left:537.8px;top:17.4px" width="4.4" height="4.6" viewBox="0 0 9 9"><path d="M0 0h2.4v2.4H0zM3.3 0h2.4v2.4H3.3zM6.6 0H9v2.4H6.6zM0 3.3h2.4v2.4H0zM3.3 3.3h2.4v2.4H3.3zM6.6 3.3H9v2.4H6.6zM0 6.6h2.4V9H0zM3.3 6.6h2.4V9H3.3zM6.6 6.6H9V9H6.6z" fill="#e0e0e0"/></svg>
<div class="a" style="left:543.6px;top:15.2px;font-size:5.1px;line-height:8px;color:#d8d8d8;white-space:nowrap">보기</div>
<svg class="a" style="left:0;top:441.8px" width="12" height="7" viewBox="0 0 12 7"><rect x="-3" y=".3" width="10.6" height="6" rx="1.4" fill="#bebebe"/><path d="M8.2 2.6 L10.4 1 V6 L8.2 4.4 Z" fill="#bebebe"/></svg>
<svg class="a" style="left:18.4px;top:443.4px" width="4" height="3" viewBox="0 0 4 3"><path d="M.4 2.4 L2 .7 L3.6 2.4" fill="none" stroke="#bebebe" stroke-width=".7"/></svg>
<div class="tl" style="left:-12px;width:40px;text-align:left;text-indent:9px">디오 중지</div>
<svg class="a" style="left:152.4px;top:440.4px" width="8.6" height="8.8" viewBox="0 0 10 10"><path d="M5 .3 L9.2 1.8 V5 C9.2 7.6 7.2 9 5 9.8 C2.8 9 .8 7.6 .8 5 V1.8 Z" fill="#c2c2c2"/><path d="M5 1.4 V5 H8.2 V2.5 Z M5 5 H1.8 C1.9 6.9 3.4 8 5 8.7 Z" fill="#1b1b1b"/></svg>
<div class="tl" style="left:136.4px">보안</div>
<svg class="a" style="left:194px;top:440.6px" width="11.6" height="8" viewBox="0 0 12 8"><circle cx="4" cy="2.2" r="1.9" fill="#bebebe"/><path d="M.4 7.8 C.4 5.4 2 4.6 4 4.6 S7.6 5.4 7.6 7.8 Z" fill="#bebebe"/><circle cx="8.8" cy="2.6" r="1.5" fill="#bebebe"/><path d="M8.2 7.8 C8.2 6.2 7.9 5.4 7.4 4.9 C9.6 4.4 11.6 5.2 11.6 7.8 Z" fill="#bebebe"/></svg>
<div class="a" style="left:207.6px;top:441.4px;font-size:5.2px;line-height:6px;color:#bdbdbd">37</div>
<svg class="a" style="left:220.5px;top:443.4px" width="4" height="3" viewBox="0 0 4 3"><path d="M.4 2.4 L2 .7 L3.6 2.4" fill="none" stroke="#bebebe" stroke-width=".7"/></svg>
<div class="tl" style="left:180px">참가자</div>
<svg class="a" style="left:240.2px;top:440.8px" width="9.2" height="8.2" viewBox="0 0 10 9"><path d="M1.6 .3 H8.4 C9.2 .3 9.8 .9 9.8 1.7 V5 C9.8 5.8 9.2 6.4 8.4 6.4 H4.6 L2.4 8.6 V6.4 H1.6 C.8 6.4 .2 5.8 .2 5 V1.7 C.2 .9 .8 .3 1.6 .3 Z" fill="#bebebe"/></svg>
<div class="tl" style="left:224.2px">채팅</div>
<svg class="a" style="left:276.4px;top:440.8px" width="10.8" height="8" viewBox="0 0 12 8" preserveAspectRatio="none"><rect x="0" y="0" width="12" height="8" rx="1.6" fill="#23d959"/><path d="M6 1.6 L8.6 4.2 H6.8 V6.4 H5.2 V4.2 H3.4 Z" fill="#10331a"/></svg>
<svg class="a" style="left:295.4px;top:443.4px" width="4" height="3" viewBox="0 0 4 3"><path d="M.4 2.4 L2 .7 L3.6 2.4" fill="none" stroke="#bebebe" stroke-width=".7"/></svg>
<div class="tl" style="left:261.8px;color:#20b34f">화면 공유</div>
<svg class="a" style="left:315px;top:440px" width="9" height="9" viewBox="0 0 10 10"><circle cx="5" cy="5" r="4.3" fill="none" stroke="#bebebe" stroke-width=".9"/><circle cx="5" cy="5" r="2.8" fill="#bebebe"/></svg>
<div class="tl" style="left:299.5px">기록</div>
<svg class="a" style="left:348px;top:440.2px" width="9" height="9" viewBox="0 0 10 10"><rect x=".3" y=".3" width="4.2" height="4.2" rx=".6" fill="#c2c2c2"/><rect x="5.5" y=".3" width="4.2" height="4.2" rx=".6" fill="#c2c2c2"/><rect x=".3" y="5.5" width="4.2" height="4.2" rx=".6" fill="#c2c2c2"/><rect x="5.5" y="5.5" width="4.2" height="4.2" rx=".6" fill="#c2c2c2"/></svg>
<div class="tl" style="left:332.5px">소회의실</div>
<svg class="a" style="left:381.4px;top:439.4px" width="10" height="10" viewBox="0 0 10 10"><circle cx="4.4" cy="5.6" r="3.9" fill="#bebebe"/><circle cx="3" cy="4.8" r=".6" fill="#1b1b1b"/><circle cx="5.8" cy="4.8" r=".6" fill="#1b1b1b"/><path d="M2.6 6.6 Q4.4 8.2 6.2 6.6" fill="none" stroke="#1b1b1b" stroke-width=".6"/><path d="M8.4 .4 V3 M7.1 1.7 H9.7" stroke="#bebebe" stroke-width=".8"/></svg>
<div class="tl" style="left:366px">반응</div>
<div class="a" style="left:528.4px;top:443px;width:25.8px;height:11px;background:#c3252b;border-radius:2.2px;color:#fff;font-size:5.5px;font-weight:500;line-height:11px;text-align:center">나가기</div>

<div class="a" style="left:0;top:458.8px;width:559px;height:1.2px;background:#444"></div>
<div class="panel">

<svg class="a" style="left:8.9px;top:21.2px" width="4" height="3.4" viewBox="0 0 4 3.4"><path d="M.5 .7 L2 2.5 L3.5 .7" fill="none" stroke="#44445a" stroke-width=".9"/></svg>
<div class="a" style="left:54.2px;top:17.8px;font-size:6.2px;line-height:9px;font-weight:500;color:#232333;white-space:nowrap">참가자(37)</div>
<div class="a" style="left:8.4px;top:35.2px;width:90px;height:13.4px;box-sizing:border-box;border:.7px solid #c6c6d6;border-radius:3.8px"></div>
<svg class="a" style="left:13px;top:39px" width="6" height="6" viewBox="0 0 10 10"><circle cx="4.2" cy="4.2" r="3.2" fill="none" stroke="#777" stroke-width="1.1"/><path d="M6.6 6.6L9.4 9.4" stroke="#777" stroke-width="1.2"/></svg>
<div class="a" style="left:19.6px;top:37.8px;font-size:5.9px;line-height:8.6px;color:#8e8e9a;white-space:nowrap">참가자 찾기</div>
<div class="pav" style="top:52.4px;background:#0d5ca8;font-size:7.5px;font-weight:normal">P</div><div class="pn" style="top:52.4px">[VN.St] Ninh Thai Phan</div>
<div class="pav" style="top:69.7px;background:#2f80c2;font-size:5px">AS</div><div class="pn" style="top:69.7px">Aidan Stansfield</div>
<div class="pav" style="top:87px;background:#e2570a;font-size:5px">AI</div><div class="pn" style="top:87px">Amir Iskandar</div>
<div class="pav" style="top:104.3px;background:#12a573;font-size:5px">AL</div><div class="pn" style="top:104.3px">Ashley Lin</div>
<div class="pav" style="top:121.6px;background:#21b14c;font-size:5px">HL</div><div class="pn" style="top:121.6px">Henry Lim</div>
<div class="pav" style="top:138.9px;background:none"><svg width="11.6" height="11.6" viewBox="0 0 13 13"><rect width="13" height="13" fill="#fff"/><path d="M0 0h1v1h-1zM1 0h1v1h-1zM2 0h1v1h-1zM3 0h1v1h-1zM4 0h1v1h-1zM5 0h1v1h-1zM7 0h1v1h-1zM9 0h1v1h-1zM10 0h1v1h-1zM11 0h1v1h-1zM12 0h1v1h-1zM0 1h1v1h-1zM3 1h1v1h-1zM4 1h1v1h-1zM5 1h1v1h-1zM7 1h1v1h-1zM8 1h1v1h-1zM9 1h1v1h-1zM12 1h1v1h-1zM0 2h1v1h-1zM3 2h1v1h-1zM4 2h1v1h-1zM5 2h1v1h-1zM6 2h1v1h-1zM8 2h1v1h-1zM9 2h1v1h-1zM12 2h1v1h-1zM0 3h1v1h-1zM1 3h1v1h-1zM2 3h1v1h-1zM3 3h1v1h-1zM4 3h1v1h-1zM8 3h1v1h-1zM9 3h1v1h-1zM10 3h1v1h-1zM11 3h1v1h-1zM12 3h1v1h-1zM1 4h1v1h-1zM3 4h1v1h-1zM4 4h1v1h-1zM5 4h1v1h-1zM6 4h1v1h-1zM8 4h1v1h-1zM11 4h1v1h-1zM0 5h1v1h-1zM1 5h1v1h-1zM2 5h1v1h-1zM4 5h1v1h-1zM5 5h1v1h-1zM7 5h1v1h-1zM8 5h1v1h-1zM11 5h1v1h-1zM3 6h1v1h-1zM5 6h1v1h-1zM6 6h1v1h-1zM8 6h1v1h-1zM9 6h1v1h-1zM10 6h1v1h-1zM2 7h1v1h-1zM6 7h1v1h-1zM9 7h1v1h-1zM11 7h1v1h-1zM3 8h1v1h-1zM4 8h1v1h-1zM6 8h1v1h-1zM7 8h1v1h-1zM8 8h1v1h-1zM9 8h1v1h-1zM10 8h1v1h-1zM12 8h1v1h-1zM0 9h1v1h-1zM1 9h1v1h-1zM2 9h1v1h-1zM3 9h1v1h-1zM4 9h1v1h-1zM5 9h1v1h-1zM7 9h1v1h-1zM8 9h1v1h-1zM0 10h1v1h-1zM3 10h1v1h-1zM4 10h1v1h-1zM5 10h1v1h-1zM6 10h1v1h-1zM9 10h1v1h-1zM10 10h1v1h-1zM11 10h1v1h-1zM12 10h1v1h-1zM0 11h1v1h-1zM3 11h1v1h-1zM4 11h1v1h-1zM6 11h1v1h-1zM7 11h1v1h-1zM8 11h1v1h-1zM9 11h1v1h-1zM0 12h1v1h-1zM1 12h1v1h-1zM2 12h1v1h-1zM3 12h1v1h-1zM7 12h1v1h-1zM12 12h1v1h-1z" fill="#2a2a2a"/><rect x="1" y="1" width="2" height="2" fill="#2a2a2a"/><rect x="10" y="1" width="2" height="2" fill="#2a2a2a"/><rect x="1" y="10" width="2" height="2" fill="#2a2a2a"/></svg></div><div class="pn" style="top:138.9px">KB Chen</div>
<div class="pav" style="top:156.2px;background:none"><svg width="11.6" height="11.6" viewBox="0 0 40 40"><rect width="40" height="40" fill="#6d7276"/><path d="M16 0 L40 9 V13 L14 2 Z" fill="#a9adb0"/><path d="M26 8 H40 V32 H28 Z" fill="#25262c"/><path d="M0 33 Q4 29 12 30 L26 31 Q34 31 40 37 V40 H0 Z" fill="#b4b7bb"/><path d="M3.4 14 Q2 22 6 28 Q10 33 17 33 Q24 32 27 26 Q29.6 20 27.4 12 Q24 5 15 5 Q6 6 3.4 14 Z" fill="#dcb69b"/><path d="M2 18 Q0 8 7 3.4 Q14 -.6 21 2.6 Q26 5 27.6 12 Q24 8 19 8.4 Q11 9 8 13 Q6 16 5.4 19 Q3.4 16.6 2 18 Z" fill="#17171a"/><path d="M7.6 14.6 Q12 12.4 17.6 14 L18 18 Q13 20.4 9 18.6 Z M19.6 13.4 Q23.6 11.6 27.2 12.6 L27.2 16.6 Q23 18.4 20 17 Z" fill="none" stroke="#23232a" stroke-width="1.6"/></svg></div><div class="pn" style="top:156.2px">Naoki Takayama</div>
<div class="pav" style="top:173.5px;background:none"><svg width="11.6" height="11.6" viewBox="0 0 12 12"><defs><linearGradient id="yg" x1="0" x2="1"><stop offset="0" stop-color="#d8a63a"/><stop offset=".45" stop-color="#e6b94a"/><stop offset="1" stop-color="#a9762a"/></linearGradient><filter id="yb"><feGaussianBlur stdDeviation=".35"/></filter></defs><rect width="12" height="12" fill="url(#yg)"/><g filter="url(#yb)"><rect x="4.6" y="1.4" width="3.2" height="7" fill="#7a2a10"/><rect x="5.4" y="2.6" width="1.6" height="3" fill="#d0521c"/><rect x="3.4" y="7.6" width="6" height="4.4" fill="#5a4a40"/><rect x="8.6" y="0" width="1.4" height="9" fill="#8a5a20"/></g></svg></div><div class="pn" style="top:173.5px">Yi Kuo</div>
<div class="pav" style="top:190.8px;background:#008878;font-size:4.6px">邦寧</div><div class="pn" style="top:190.8px">吳邦寧</div>

<div class="btn" style="left:19px;top:221px;width:16.6px;height:8.6px;line-height:8.6px">초대</div>
<div class="btn" style="left:54.6px;top:221px;width:40px;height:8.6px;line-height:8.6px;text-align:left;text-indent:3.4px">모두 음소거</div>
<div class="a" style="left:8.8px;top:235.8px;width:80px;height:.7px;background:#ebebf1"></div>
<svg class="a" style="left:8.5px;top:244.2px" width="4" height="3.4" viewBox="0 0 4 3.4"><path d="M.5 .7 L2 2.5 L3.5 .7" fill="none" stroke="#44445a" stroke-width=".9"/></svg>
<div class="a" style="left:62px;top:241.8px;font-size:6.2px;line-height:9px;font-weight:500;color:#232333;white-space:nowrap">채팅</div>
<div class="bub" style="top:254.4px;width:28px;height:5.2px;border-radius:0 0 4px 4px"></div>
<div class="snd" style="top:266px">발신자<b>[AU.21.St] Henry</b>수신자</div>
<div class="bub" style="top:275px;width:90px;height:29.4px"><span style="top:6px;line-height:8px;word-spacing:.9px">too bad no hands on diy</span><span style="top:17.6px;line-height:8px">haha</span></div>
<div class="snd" style="top:310.2px">발신자<b>[TH.St] Terapat Chattrakulrak</b></div>
<div class="bub" style="top:320px;width:40.4px;height:17.4px"><span style="top:4.7px;line-height:8px">Thank you!</span></div>
<div class="snd" style="top:343.7px">발신자<b>[VN.21.St] Nghia Nguyen Phu</b></div>
<div class="bub" style="top:352.8px;width:29px;height:17.2px"><span style="top:4.9px;line-height:8px">Thanks</span></div>
<div class="snd" style="top:376.3px">발신자<b>[VN.St] Ninh Thai Phan</b>수신자</div>
<div class="bub" style="top:385.8px;width:41px;height:17.2px"><span style="top:5px;line-height:8px">thank you!!</span></div>
<div class="a" style="left:0;top:409.2px;width:81px;height:.6px;background:#f3f3f6"></div>
<div class="a" style="left:8.3px;top:415px;font-size:5.3px;line-height:8px;color:#30303c;white-space:nowrap">받는 사람:</div>
<div class="btn" style="left:34px;top:414.3px;width:24.6px;height:9.6px;line-height:9.6px;text-align:left;text-indent:5px;font-size:4.9px;font-weight:500">모두</div>
<svg class="a" style="left:51.6px;top:417.6px" width="4" height="3.3" viewBox="0 0 5 4"><path d="M.6 .8 L2.5 2.9 L4.4 .8" fill="none" stroke="#232333" stroke-width="1"/></svg>
<div class="a" style="left:8.3px;top:426.6px;font-size:5.8px;line-height:8px;color:#8e8e9a;white-space:nowrap">여기에 메시지 입력...</div>
<div class="a" style="left:0;top:458.8px;width:81px;height:1.2px;background:#cfcfcf"></div>
</div>
<div class="a" style="left:0;top:0;width:640px;height:1px;background:linear-gradient(90deg,#d9cfcf,#c6cfd8)"></div>
<div class="a" style="left:557.2px;top:12.6px;width:1.4px;height:447.4px;background:#121212"></div><div class="a" style="left:558.6px;top:12.6px;width:1px;height:447.4px;background:#9a9a9a"></div>
</body></html>
